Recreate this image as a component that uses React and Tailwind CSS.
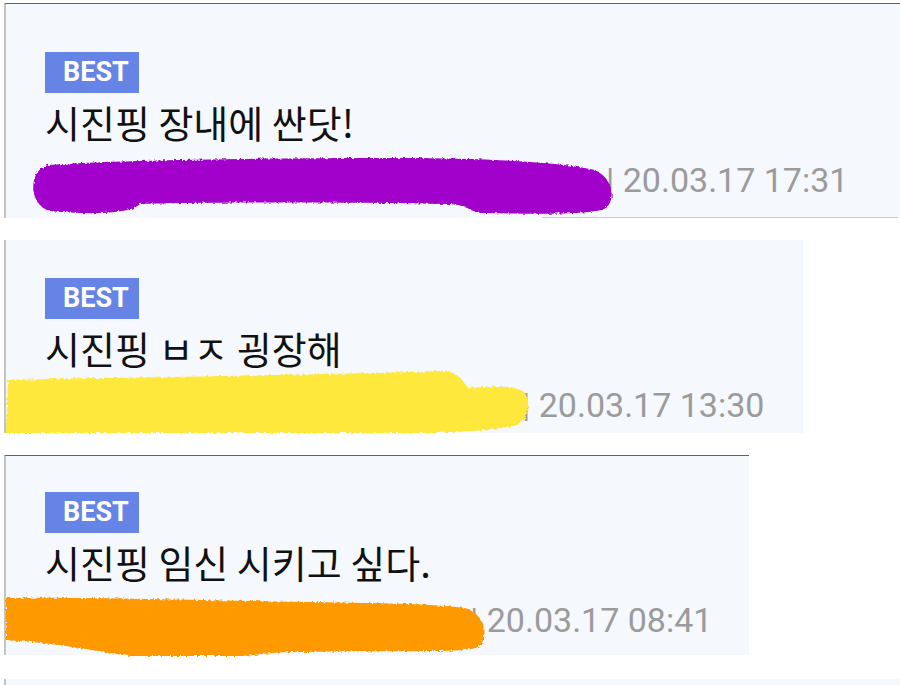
import React from 'react'

const cards = [
  {
    box: 'w-[896px] border-t border-t-[#2f7480] pt-[48px]',
    dateGap: 'mt-[17px]',
    bottom: 'mt-[17px] ml-auto mr-[2px] w-[356px] h-px bg-[#c9c9c9]',
    title: '시진핑 장내에 싼닷!',
    name: 'w-[561px]',
    date: '20.03.17 17:31',
    offsetY: 4,
    color: '#a204cb',
    blot:
      'M 48 165 C 120 160, 250 158, 400 158 C 480 158, 560 162, 595 170 C 613 178, 616 200, 606 208 C 595 215, 540 214, 482 213 C 470 212, 468 205, 450 204 C 350 202, 200 202, 140 204 C 130 214, 90 215, 50 211 C 28 205, 28 170, 48 165 Z',
  },
  {
    box: 'w-[799px] mt-[22px] pt-[38px] pb-[8px]',
    dateGap: 'mt-[16px]',
    bottom: null,
    title: '시진핑 ㅂㅈ 굉장해',
    name: 'w-[477px]',
    date: '20.03.17 13:30',
    offsetY: 240,
    color: '#fee83a',
    blot:
      'M 8 380 C 100 377, 300 376, 440 371 C 455 370, 462 378, 468 388 C 490 386, 515 385, 524 392 C 531 400, 529 418, 520 424 C 500 430, 470 432, 420 433 L 6 433 Z',
  },
  {
    box: 'w-[745px] mt-[22px] border-t border-t-[#2f7480] pt-[36px] pb-[15px]',
    dateGap: 'mt-[17px]',
    bottom: null,
    title: '시진핑 임신 시키고 싶다.',
    name: 'w-[425px]',
    date: '20.03.17 08:41',
    offsetY: 456,
    color: '#fe9a05',
    blot:
      'M 6 598 C 60 597, 150 599, 250 601 C 320 603, 420 602, 465 608 C 486 614, 491 640, 476 648 C 460 653, 400 650, 300 652 C 262 652, 258 656, 240 656 L 130 656 C 100 652, 60 643, 6 640 Z',
  },
]

function Blot({ color, d, offsetY, id }) {
  return (
    <svg className="absolute left-0 top-0 w-full h-full pointer-events-none overflow-visible">
      <defs>
        <filter id={id} x="-5%" y="-20%" width="110%" height="140%">
          <feTurbulence type="fractalNoise" baseFrequency="0.35" numOctaves="2" seed="3" />
          <feDisplacementMap in="SourceGraphic" scale="4" />
        </filter>
      </defs>
      <g transform={`translate(-6,-${offsetY})`}>
        <path d={d} fill={color} filter={`url(#${id})`} />
      </g>
    </svg>
  )
}

function Card({ c, i }) {
  return (
    <div className={`relative ml-[4px] border-l-2 border-l-[#c4c4c4] bg-[#f5f8fc] ${c.box}`}>
      <div className="pl-[39px]">
        {/* badge */}
        <div className="flex items-center w-[94px] h-[41px] pl-[18px] bg-[#6683e6] text-white font-bold text-[27px] leading-none font-['Roboto',sans-serif]">
          BEST
        </div>
        <div className="mt-[8px] text-[38px] leading-[42px] text-[#111] font-['Noto_Sans_CJK_KR',sans-serif]">
          {c.title}
        </div>
        <div className={`${c.dateGap} flex text-[34px] leading-[40px] text-[#9b9b9b] font-['Roboto',sans-serif]`}>
          <span className={`${c.name} shrink-0`} />
          <span className="whitespace-pre">| {c.date}</span>
        </div>
      </div>
      {c.bottom && <div className={c.bottom} />}
      <Blot color={c.color} d={c.blot} offsetY={c.offsetY} id={`rough${i}`} />
    </div>
  )
}

export default function App() {
  return (
    <div className="w-[900px] h-[685px] overflow-hidden bg-white pt-[3px]">
      {cards.map((c, i) => (
        <Card key={i} c={c} i={i} />
      ))}
      {/* next item peeking at the bottom */}
      <div className="ml-[4px] mt-[24px] w-[896px] h-[20px] border-l-2 border-l-[#c4c4c4] bg-[#f5f8fc]" />
    </div>
  )
}
